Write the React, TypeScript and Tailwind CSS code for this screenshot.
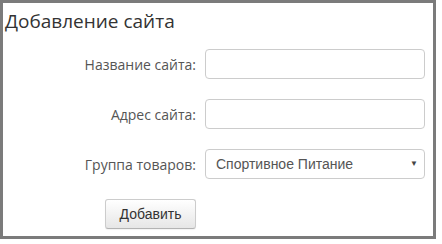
import React from "react";

export default function App() {
  return (
    <div className="w-[442px] h-[244px] bg-white">
      <div className="w-[436px] h-[239px] border-[3px] border-[#7b7b7b] bg-white flex flex-col">
        <h1
          className="pl-[2px] pt-[6px] text-[19px] leading-[24px] text-[#333] font-normal"
          style={{ fontFamily: '"Open Sans", sans-serif' }}
        >
          Добавление сайта
        </h1>
        <div className="mt-[16px] grid grid-cols-[193px_220px] gap-x-[9px] gap-y-[20px]">
          <label
            className="h-[30px] flex items-center justify-end text-[14px] text-[#555]"
            style={{ fontFamily: '"Open Sans", sans-serif' }}
          >
            Название сайта:
          </label>
          <input
            type="text"
            className="h-[30px] w-[220px] border border-[#ccc] rounded-[4px] bg-white outline-none"
          />
          <label
            className="h-[30px] flex items-center justify-end text-[14px] text-[#555]"
            style={{ fontFamily: '"Open Sans", sans-serif' }}
          >
            Адрес сайта:
          </label>
          <input
            type="text"
            className="h-[30px] w-[220px] border border-[#ccc] rounded-[4px] bg-white outline-none"
          />
          <label
            className="h-[30px] flex items-center justify-end text-[14px] text-[#555]"
            style={{ fontFamily: '"Open Sans", sans-serif' }}
          >
            Группа товаров:
          </label>
          <div
            className="h-[30px] w-[220px] border border-[#ccc] rounded-[4px] bg-white flex items-center justify-between pl-[10px] pr-[6px] text-[14px] text-[#555]"
            style={{ fontFamily: '"Liberation Sans", Arial, sans-serif' }}
          >
            <span>Спортивное Питание</span>
            <span className="text-[8px] text-[#444]">▼</span>
          </div>
          <div className="flex justify-end">
            <button
              className="h-[30px] w-[91px] border border-[#ccc] border-b-[#b3b3b3] rounded-[3px] bg-gradient-to-b from-white to-[#e6e6e6] text-[14px] text-[#333] shadow-[0_1px_1px_rgba(0,0,0,0.05)]"
              style={{ fontFamily: '"Liberation Sans", Arial, sans-serif' }}
            >
              Добавить
            </button>
          </div>
          <div />
        </div>
      </div>
    </div>
  );
}
